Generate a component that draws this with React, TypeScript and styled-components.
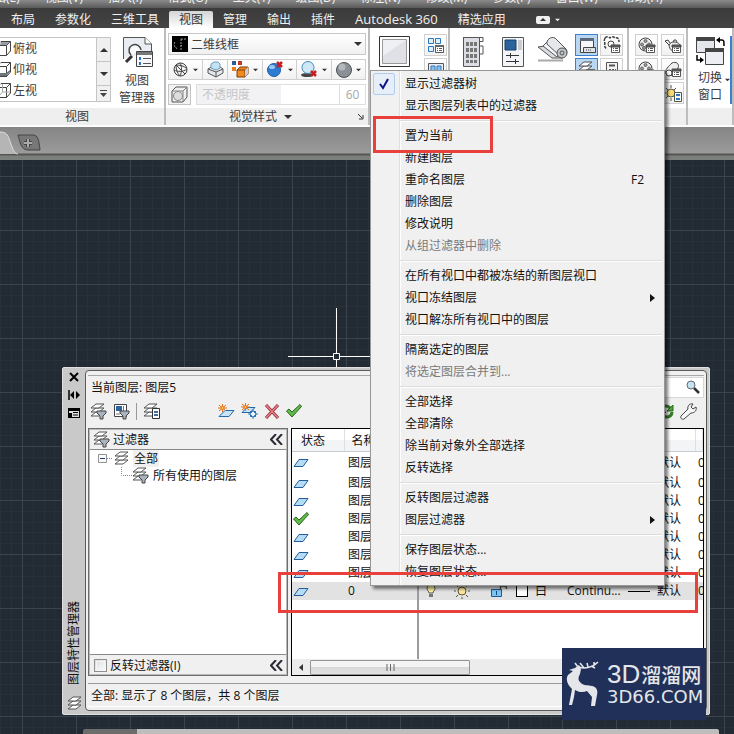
import React from "react";
import styled, { createGlobalStyle, css } from "styled-components";

const uiFont = '"Open Sans", "Noto Sans CJK SC", sans-serif';

const GlobalStyle = createGlobalStyle`
  *, *::before, *::after { box-sizing: border-box; }
  html, body { margin: 0; height: 100%; }
  body { font-family: ${uiFont}; font-size: 12px; color: #111; background: #222a34; overflow: hidden; }
  button, input, select { font: inherit; color: inherit; margin: 0; padding: 0; border: 0; background: none; border-radius: 0; }
  svg { display: block; flex: none; }
`;

/* ---------- Application shell ---------- */

const Shell = styled.div`
  position: relative;
  display: flex;
  flex-direction: column;
  min-height: 100vh;
  overflow: hidden;
`;

const MenuBar = styled.nav`
  display: flex;
  align-items: flex-end;
  height: 8px;
  overflow: hidden;
  background: linear-gradient(#8a8a8a, #5a5a5a);
`;

const MenuLink = styled.button`
  flex: none;
  height: 20px;
  padding-right: 25px;
  line-height: 20px;
  color: #f2f2f2;
  white-space: nowrap;
  &:first-child { margin-left: -18px; }
`;

const TabBar = styled.nav`
  display: flex;
  align-items: flex-end;
  height: 20px;
  padding-left: 1px;
  background: linear-gradient(#3b3b3b, #444);
`;

const RibbonTab = styled.button<{ $active?: boolean; $latin?: boolean }>`
  flex: none;
  height: 17px;
  padding: 0 10px;
  font-size: ${(p) => (p.$latin ? 13 : 12)}px;
  line-height: 17px;
  color: ${(p) => (p.$active ? "#333" : "#f0f0f0")};
  background: ${(p) => (p.$active ? "linear-gradient(#d4d4d4, #fff)" : "none")};
  border-radius: 2px 2px 0 0;
  white-space: nowrap;
`;

const RibbonToggle = styled.button`
  display: flex;
  align-items: center;
  height: 17px;
  padding-left: 20px;
`;

const CaretSlot = styled.span`
  display: flex;
  align-items: center;
  height: 17px;
  padding-left: 5px;
`;

/* ---------- Ribbon ---------- */

const Ribbon = styled.div`
  display: flex;
  background: #fff;
  border-bottom: 2px solid #fdfdfd;
  color: #3c3c3c;
`;

const Panel = styled.section<{ $width?: number }>`
  display: flex;
  flex-direction: column;
  ${(p) => (p.$width ? css`flex: none; width: ${p.$width}px;` : css`flex: 1; min-width: 0;`)}
  border-right: 2px solid #bdbdbd;
  overflow: hidden;
`;

const PanelBody = styled.div<{ $pad?: string; $gap?: number }>`
  display: flex;
  gap: ${(p) => p.$gap ?? 0}px;
  height: 80px;
  padding: ${(p) => p.$pad ?? "6px 6px 0"};
`;

const PanelStack = styled.div`
  display: flex;
  flex-direction: column;
  gap: 4px;
  height: 80px;
  padding: 5px 2px 0;
`;

const PanelTitle = styled.div<{ $shift?: number }>`
  display: flex;
  align-items: center;
  justify-content: center;
  gap: 7px;
  height: 17px;
  padding: 0 4px;
  padding-right: ${(p) => p.$shift ?? 4}px;
  line-height: 17px;
  background: #efefef;
`;

const TitleSpacer = styled.span`
  flex: 1;
`;

const ViewList = styled.div`
  display: flex;
  width: 111px;
  height: 65px;
  border: 1px solid #c4c4c4;
  border-left: 0;
`;

const ViewItems = styled.div`
  flex: 1;
  overflow: hidden;
`;

const ViewItem = styled.button`
  display: flex;
  align-items: center;
  gap: 2px;
  width: 100%;
  height: 21px;
  line-height: 21px;
`;

const Spinner = styled.div`
  display: grid;
  grid-template-rows: 24px 24px 1fr;
  width: 14px;
  border-left: 1px solid #c4c4c4;
  background: #f0f0f0;
`;

const SpinButton = styled.button`
  display: flex;
  align-items: center;
  justify-content: center;
  border-bottom: 1px solid #c4c4c4;
  &:last-child { border-bottom: 0; }
`;

const BigButton = styled.button<{ $iconOnly?: boolean }>`
  display: flex;
  flex-direction: column;
  align-items: center;
  flex: none;
  gap: 4px;
  padding-top: ${(p) => (p.$iconOnly ? 2 : 0)}px;
  line-height: 17px;
`;

const StyleSelect = styled.label`
  display: flex;
  align-items: center;
  height: 22px;
  padding: 0 3px;
  gap: 3px;
  border: 1px solid #c8c8c8;
  background: linear-gradient(#fff, #f0f0f0);
`;

const PlainSelect = styled.select`
  flex: 1;
  min-width: 0;
  appearance: none;
`;

const ToolRow = styled.div`
  display: flex;
  height: 21px;
`;

const SplitTool = styled.button<{ $grow?: number }>`
  display: flex;
  align-items: center;
  justify-content: space-evenly;
  flex: ${(p) => p.$grow ?? 35} 1 0;
  border: 1px solid #cfcfcf;
  border-left-width: 0;
  background: linear-gradient(#fff, #f1f1f1);
  &:first-child { border-left-width: 1px; }
`;

const SquareTool = styled.button`
  display: flex;
  align-items: center;
  justify-content: center;
  width: 23px;
  border: 1px solid #c4c4c4;
  background: #f2f2f2;
`;

const Opacity = styled.label`
  display: flex;
  flex: 1;
  margin-left: 5px;
  padding-left: 5px;
  line-height: 19px;
  border: 1px solid #dedede;
  color: #c6c6c6;
  background: linear-gradient(90deg, #f2f2f4 50%, #fff 50%);
`;

const OpacityValue = styled.input`
  width: 26px;
  margin-left: auto;
  text-align: center;
  border-left: 1px solid #dedede;
  color: #a8a8a8;
`;

const ToolColumn = styled.div`
  display: flex;
  flex-direction: column;
  gap: 2px;
`;

const SmallTool = styled.button<{ $active?: boolean }>`
  display: flex;
  align-items: center;
  justify-content: center;
  width: 23px;
  height: 22px;
  border: 1px solid ${(p) => (p.$active ? "#3c7fd0" : "#d0d0d0")};
  background: ${(p) => (p.$active ? "#b9d7f3" : "linear-gradient(#fff, #f1f1f1)")};
`;

const SwitchCaret = styled.span`
  align-self: center;
  padding-top: 16px;
`;

const EdgeTool = styled.button`
  width: 6px;
  height: 68px;
  border: 2px solid #3c7fd0;
  background: #b9d7f3;
`;

/* ---------- Drawing area ---------- */

const FileTabs = styled.div`
  display: flex;
  align-items: flex-start;
  height: 33px;
  background: linear-gradient(#858585, #9b9b9b 26px, #555 27px, #555 28px, #7c807c 29px);
`;

const Canvas = styled.main`
  position: relative;
  flex: 1;
  background-color: #222a34;
  background-image:
    linear-gradient(90deg, #3b434d 1px, transparent 1px),
    linear-gradient(#3b434d 1px, transparent 1px),
    repeating-linear-gradient(90deg, #28303a 0 1px, transparent 1px 20%),
    repeating-linear-gradient(#28303a 0 1px, transparent 1px 20%);
  background-size: 54px 54px;
  background-position: 22px 16px;
`;

const Crosshair = styled.svg`
  position: absolute;
  left: 288px;
  top: 148px;
`;

const CommandBar = styled.div`
  position: absolute;
  left: 83px;
  right: 15px;
  bottom: 0;
  height: 5px;
  border-radius: 2px 2px 0 0;
  background: linear-gradient(90deg, #6c6c6c 54px, #bdbdbd 54px);
`;

/* ---------- Layer palette ---------- */

const Palette = styled.section`
  position: absolute;
  left: 62px;
  right: 24px;
  top: 207px;
  bottom: 19px;
  display: flex;
  padding: 2px 2px 3px 0;
  border-radius: 2px;
  border: 1px solid #e0e0e0;
  background: #c9c9c9;
`;

const PaletteSide = styled.div`
  display: flex;
  flex-direction: column;
  align-items: center;
  gap: 4px;
  width: 22px;
`;

const SideButton = styled.button`
  display: flex;
  align-items: center;
  justify-content: center;
  width: 18px;
  height: 14px;
`;

const SideTitle = styled.h2`
  margin: auto 0 7px;
  font-size: 12px;
  line-height: 18px;
  font-weight: 400;
  writing-mode: vertical-rl;
  text-orientation: sideways;
  transform: rotate(180deg);
`;

const PaletteMain = styled.div`
  display: flex;
  flex-direction: column;
  flex: 1;
  min-width: 0;
  padding: 4px 2px 0;
  border: 1px solid #5a5a5a;
  border-radius: 4px;
  background: #f0f0f0;
`;

const PaletteHeader = styled.div`
  display: flex;
  align-items: center;
  justify-content: space-between;
  height: 23px;
  padding-left: 3px;
  border-top: 1px solid #a8a8a8;
`;

const SearchBox = styled.label`
  display: flex;
  align-items: center;
  width: 170px;
  height: 21px;
  padding-right: 3px;
  border: 1px solid #d8d8d8;
  background: #fff;
`;

const SearchInput = styled.input`
  flex: 1;
  min-width: 0;
  outline: none;
`;

const Toolbar = styled.div`
  display: flex;
  align-items: center;
  gap: 6px;
  height: 30px;
  padding: 0 7px 4px 2px;
`;

const ToolButton = styled.button`
  display: flex;
  flex: none;
`;

const ToolDivider = styled.span`
  width: 1px;
  height: 17px;
  background: #999;
`;

const ToolGap = styled.span<{ $width?: number }>`
  ${(p) => (p.$width ? css`width: ${p.$width}px;` : css`flex: 1;`)}
`;

const Panes = styled.div`
  display: flex;
  gap: 3px;
  flex: 1;
  min-height: 0;
`;

const FilterPane = styled.div`
  display: flex;
  flex-direction: column;
  flex: none;
  width: 200px;
  border: 1px solid #6e6e6e;
  outline: 1px solid #b9b9b9;
  outline-offset: -2px;
  background: #fff;
`;

const FilterHead = styled.div`
  display: flex;
  align-items: center;
  height: 21px;
  gap: 3px;
  padding: 0 4px 0 4px;
  border-bottom: 1px solid #8a8a8a;
  background: #f0f0f0;
`;

const FilterFoot = styled.div`
  display: flex;
  align-items: center;
  height: 21px;
  padding: 0 4px 0 5px;
  border-top: 1px solid #8a8a8a;
  background: #f0f0f0;
`;

const Grow = styled.span`
  flex: 1;
`;

const CollapseButton = styled.button`
  display: flex;
`;

const Tree = styled.ul`
  flex: 1;
  margin: 0;
  padding: 0 0 0 9px;
  list-style: none;
`;

const TreeRow = styled.li<{ $depth?: number }>`
  display: flex;
  align-items: center;
  height: 17px;
  padding-left: ${(p) => (p.$depth ?? 0) * 23}px;
  line-height: 17px;
`;

const TreeLabel = styled.span<{ $selected?: boolean }>`
  margin-left: 3px;
  padding: 0 1px;
  background: ${(p) => (p.$selected ? "#f0f0f0" : "none")};
`;

const CheckLabel = styled.label`
  display: flex;
  align-items: center;
  gap: 3px;
`;

const CheckBox = styled.input`
  appearance: none;
  width: 13px;
  height: 13px;
  border: 1px solid #8f8f8f;
  background: linear-gradient(135deg, #d8dce0, #fff);
  outline: 1px solid #f4f4f4;
  outline-offset: -3px;
`;

const ListPane = styled.div`
  position: relative;
  display: flex;
  flex-direction: column;
  flex: 1;
  min-width: 0;
  overflow: hidden;
  border: 1px solid #000;
  background: #fff;
`;

const LayerTable = styled.table`
  width: 100%;
  table-layout: fixed;
  border-collapse: collapse;
  white-space: nowrap;
`;

const HeadCell = styled.th<{ $width?: number }>`
  ${(p) => p.$width && css`width: ${p.$width}px;`}
  height: 22px;
  padding: 0 0 0 9px;
  overflow: hidden;
  text-align: left;
  font-weight: 400;
  border-right: 1px solid #dcdfe3;
  border-bottom: 1px solid #c9ccd0;
  background: linear-gradient(#fff 50%, #f3f4f6 50%);
  &:nth-child(2) { padding-left: 7px; }
`;

const LayerRow = styled.tr<{ $selected?: boolean }>`
  height: 18px;
  background: ${(p) => (p.$selected ? "#e2e2e2" : "none")};
  &:first-child { height: 23px; }
`;

const Cell = styled.td<{ $pad?: number }>`
  height: 18px;
  padding: 0 0 0 ${(p) => p.$pad ?? 2}px;
  overflow: hidden;
  line-height: 18px;
`;

const CellFlow = styled.span`
  display: flex;
  align-items: center;
  gap: 7px;
`;

const Swatch = styled.span`
  width: 12px;
  height: 12px;
  border: 1px solid #000;
  background: #fff;
`;

const WeightLine = styled.span`
  width: 22px;
  height: 1px;
  background: #000;
`;

const Splitter = styled.div`
  position: absolute;
  left: 125px;
  top: 24px;
  bottom: 16px;
  width: 2px;
  background: #9c9c9c;
`;

const ScrollBar = styled.div`
  display: flex;
  align-items: center;
  height: 16px;
  margin-top: auto;
  background: #ececec;
`;

const ScrollArrow = styled.button`
  display: flex;
  align-items: center;
  justify-content: center;
  width: 18px;
  height: 16px;
`;

const ScrollThumb = styled.div`
  display: flex;
  align-items: center;
  justify-content: center;
  width: 39%;
  height: 15px;
  border: 1px solid #959595;
  border-radius: 1px;
  background: linear-gradient(#f4f4f4 50%, #d8d8d8 50%, #e2e2e2);
`;

const PaletteStatus = styled.div`
  height: 24px;
  margin: 7px 0 3px;
  padding-left: 3px;
  line-height: 24px;
  border-top: 1px solid #9a9a9a;
  border-bottom: 1px solid #fff;
`;

/* ---------- Context menu ---------- */

const ContextMenu = styled.div`
  position: absolute;
  left: 370px;
  top: 70px;
  width: 295px;
  padding: 2px;
  border: 1px solid #979797;
  background: linear-gradient(90deg, #f1f1f1 28px, #dfdfdf 28px, #dfdfdf 29px, #fff 29px, #fff 30px, #f0f0f0 30px);
  box-shadow: 3px 3px 3px rgba(0, 0, 0, 0.5);
`;

const MenuItem = styled.button`
  display: grid;
  grid-template-columns: 32px 1fr auto 12px;
  align-items: center;
  width: 100%;
  height: 22px;
  line-height: 22px;
  text-align: left;
  white-space: nowrap;
  color: #111;
  &:disabled { color: #7a7a7a; }
`;

const MenuSeparator = styled.div`
  height: 8px;
  margin-left: 27px;
  background: linear-gradient(transparent 3px, #dcdcdc 3px, #dcdcdc 4px, #fff 4px, #fff 5px, transparent 5px);
`;

const CheckMark = styled.span`
  display: flex;
  align-items: center;
  justify-content: center;
  width: 22px;
  height: 22px;
  border: 1px solid #aeccf0;
  border-radius: 2px;
  background: #e6eef8;
`;

const Shortcut = styled.span`
  padding-right: 6px;
`;

/* ---------- Overlays ---------- */

const Marker = styled.div<{ $x: number; $y: number; $w: number; $h: number }>`
  position: absolute;
  left: ${(p) => p.$x}px;
  top: ${(p) => p.$y}px;
  width: ${(p) => p.$w}px;
  height: ${(p) => p.$h}px;
  border: 3px solid #e8403c;
  pointer-events: none;
`;

const Brand = styled.aside`
  position: absolute;
  right: 28px;
  bottom: 14px;
  display: flex;
  align-items: center;
  gap: 5px;
  width: 144px;
  height: 72px;
  padding: 0 0 0 4px;
  color: #e4e6ea;
  background: #213058;
`;

const BrandText = styled.div`
  display: flex;
  flex-direction: column;
  white-space: nowrap;
`;

const BrandName = styled.strong`
  display: flex;
  align-items: center;
  gap: 1px;
  height: 25px;
  font: 500 20px/25px "Noto Sans CJK SC", sans-serif;
`;

const BrandPrefix = styled.span`
  font: 400 26px/25px "Liberation Sans", sans-serif;
`;

const BrandSite = styled.span`
  font: 18px/20px "DejaVu Sans", sans-serif;
`;

/* ---------- Icons ---------- */

const Caret = ({ w = 7, color = "#333" }: { w?: number; color?: string }) => (
  <svg width={w} height={4} viewBox="0 0 8 4" aria-hidden="true"><path d="M0 0h8L4 4z" fill={color} /></svg>
);

const UpCaret = () => (
  <svg width={8} height={4} viewBox="0 0 8 4"><path d="M0 4h8L4 0z" fill="#333" /></svg>
);

const BarCaret = () => (
  <svg width={7} height={8} viewBox="0 0 7 8"><path d="M0 0h7v1H0zM0 3h7L3.5 7z" fill="#444" /></svg>
);

const CubeFace = ({ face }: { face: "top" | "bottom" | "left" }) => (
  <svg width={11} height={17} viewBox="0 0 11 17" fill="none" stroke="#444">
    <path d="M0 5.500h6.500v10H0M6.500 5.500l4-4v9.500l-4 4.500M10.500 1.500H1L0 2.500" />
    {face === "top" && <path d="M0 5L1 2h9L6.500 5z" fill="#999da6" stroke="none" />}
    {face === "bottom" && <path d="M0 15v-3h6l4-3v2l-4 4z" fill="#70747c" stroke="none" />}
    {face === "left" && <path d="M2.500 2v8L0 13M3 10h7" stroke="#aaa" />}
  </svg>
);

const ViewManagerIcon = () => (
  <svg width={31} height={31} viewBox="0 0 31 31" fill="none">
    <path d="M1.500 22V.500H23L29.500 7v7" fill="#e9ecf2" stroke="#555" />
    <path d="M23 .500V7h6.500" fill="#fff" stroke="#555" />
    <path d="M9 18a6 6 0 1 1 10-5" stroke="#444" strokeWidth="1.500" fill="#f9fafc" />
    <path d="M4 25l6-6" stroke="#333" strokeWidth="3" />
    <path d="M14.500 14.500h16v15h-16z" fill="#f7f9fc" stroke="#444" />
    <path d="M15 15h15v3H15z" fill="#777" />
    <path d="M17 21.500h2m-2 5h2" stroke="#2b6cc0" strokeWidth="3" />
    <path d="M21 21.500h8m-8 5h8" stroke="#555" />
  </svg>
);

const WireBoxIcon = () => (
  <svg width={16} height={16} viewBox="0 0 16 16">
    <path d="M0 0h16v16H0z" fill="#000" />
    <path d="M3 6c-2 3 0 6 3 7M10 9l-2 2M9 14V3M9 3h6" stroke="#999" strokeDasharray="2 1" fill="none" />
  </svg>
);

const ApertureIcon = () => (
  <svg width={15} height={15} viewBox="0 0 15 15" fill="none" stroke="#444">
    <circle cx="7.500" cy="7.500" r="6.500" fill="#f5f5f5" />
    <path d="M3 3l9 9M3 3c4 0 8 1 10 3M3 3c0 4 1 8 4 11M7 1c2 3 2 9 0 13M1 8c4 2 9 2 13-1" />
  </svg>
);

const XrayBoxIcon = () => (
  <svg width={17} height={17} viewBox="0 0 17 17" fill="none" stroke="#555">
    <path d="M1 8l5-3h6l4 3v4l-7 4-8-4z" fill="#e4e7ec" />
    <path d="M1 8l8 3 7-3M9 11v5" />
    <path d="M4 7V3l3-2h4l2 2v4l-4 2z" fill="#c3e2f4" stroke="#6c9fc0" />
  </svg>
);

const MaterialIcon = () => (
  <svg width={17} height={17} viewBox="0 0 17 17">
    <path d="M0 0h4v4H0z" fill="#2c5d98" /><path d="M6 0h4v4H6z" fill="#c0392b" />
    <path d="M0 6h4v4H0z" fill="#e67e22" />
    <path d="M5 9l3-3h8v7l-3 3H5z" fill="#f28a1e" stroke="#7a3d0e" />
    <path d="M5 9h8v7M13 9l3-3" stroke="#7a3d0e" fill="none" /><path d="M13 9l3-3v7l-3 3z" fill="#ccd" />
  </svg>
);

const RedX = ({ x, y }: { x: number; y: number }) => (
  <path d={`M${x} ${y}l5 5m0-5l-5 5`} stroke="#c41e1e" strokeWidth="2.500" />
);

const ShadeIcon = () => (
  <svg width={18} height={17} viewBox="0 0 18 17" fill="none">
    <circle cx="8" cy="9" r="6.500" fill="#2d7cd1" stroke="#1d5ca5" /><ellipse cx="6" cy="6" rx="3" ry="2" fill="#9cc9f2" />
    <RedX x={11} y={1} />
  </svg>
);

const ShadowIcon = () => (
  <svg width={17} height={17} viewBox="0 0 17 17" fill="none">
    <ellipse cx="6" cy="14" rx="6" ry="2" fill="#444" />
    <circle cx="7" cy="6.500" r="6" fill="#cfe8f8" stroke="#4889b5" /><RedX x={10} y={10} />
  </svg>
);

const SphereIcon = () => (
  <svg width={16} height={16} viewBox="0 0 16 16">
    <circle cx="8" cy="8" r="7.500" fill="#8b9096" stroke="#4b4f55" /><circle cx="6" cy="5" r="3.500" fill="#b3b8bd" />
  </svg>
);

const RoundBoxIcon = () => (
  <svg width={17} height={17} viewBox="0 0 17 17" fill="none" stroke="#555">
    <path d="M1 5l4-4h11v10l-4 5H1z" fill="#eee" /><path d="M1 5h11v11M12 5l4-4" stroke="#888" />
    <circle cx="7" cy="10" r="4.500" stroke="#888" fill="#ddd" />
  </svg>
);

const LauncherIcon = () => (
  <svg width={6} height={6} viewBox="0 0 6 6"><path d="M0 0l4 4M5 1v4H1" stroke="#333" fill="none" /></svg>
);

const ViewportIcon = () => (
  <svg width={31} height={31} viewBox="0 0 31 31">
    <path d="M.500 .500h30v30H.500z" fill="#fdfdfd" stroke="#333" />
    <path d="M3.500 3.500h24v24h-24z" fill="#dfe1e6" stroke="#999" /><path d="M4 4h23L4 20z" fill="#eef0f3" />
  </svg>
);

const MiniList = ({ x = 8, y = 8 }: { x?: number; y?: number }) => (
  <g>
    <path d={`M${x + 0.5} ${y + 0.5}h8v7h-8z`} fill="#fff" stroke="#555" />
    <path d={`M${x} ${y}h9v2h-9z`} fill="#666" />
    <path d={`M${x + 2} ${y + 3.5}h1m1 0h3m-5 2h1m1 0h3`} stroke="#555" />
  </g>
);

const NamedViewsIcon = () => (
  <svg width={18} height={17} viewBox="0 0 18 17" fill="none">
    <path d="M1.500 1.500h5v5h-5zM1.500 9.500h5v5h-5zM8.500 1.500h5v5h-5z" stroke="#2a78c2" fill="#e2f1fc" /><MiniList />
  </svg>
);

const JoinIcon = () => (
  <svg width={18} height={17} viewBox="0 0 18 17" fill="none">
    <path d="M1.500 2.500h15v11h-15z" stroke="#555" fill="#e9edf3" /><path d="M4 5h4v5H4zM10 5h4v5h-4z" fill="#8fc0ec" stroke="#2a78c2" />
  </svg>
);

const TowerIcon = () => (
  <svg width={22} height={31} viewBox="0 0 22 31" fill="none" stroke="#555">
    <path d="M1.500 1.500h16v29h-16z" fill="#dcdee3" /><path d="M1 1.500h20v4h-3" /><path d="M18 10h3v8h-3" />
    <path d="M5.500 6v21M9.500 6v21M13.500 6v21" stroke="#777" strokeWidth="3" strokeDasharray="4 2" />
  </svg>
);

const PropertiesIcon = () => (
  <svg width={22} height={31} viewBox="0 0 22 31" fill="none" stroke="#555">
    <path d="M.500 1.500h21v29H.500z" fill="#f4f5f8" /><path d="M3 4h11v10H3z" fill="#2c639d" stroke="#17406d" />
    <path d="M16 4h4v10h-4z" fill="#ccc" stroke="none" />
    <path d="M4 19.500h13M4 25.500h13M8.500 17v5M13.500 23v5" stroke="#333" />
  </svg>
);

const SheetRollIcon = () => (
  <svg width={32} height={27} viewBox="0 0 32 27" fill="none" stroke="#555">
    <path d="M1 24.500h25" stroke="#aaa" strokeWidth="2" /><path d="M1 11l14 11h11L16 9z" fill="#d8dbe0" />
    <path d="M6 10l14 11 4-6L12 4z" fill="#f2f3f5" /><path d="M10 8c-1-4 4-8 8-6l11 11c3 4-2 10-6 7z" fill="#e5e7ea" />
    <circle cx="25" cy="17" r="5" fill="#c0c4ca" /><circle cx="25" cy="17" r="2" />
  </svg>
);

const CommandIcon = () => (
  <svg width={18} height={17} viewBox="0 0 18 17" fill="none" stroke="#444">
    <path d="M2.500 1.500h13v14h-13z" fill="#f7f7f7" /><path d="M2 1h14v3H2z" fill="#5d6978" stroke="none" />
    <path d="M5.500 10.500h12v5h-12z" fill="#dfe3e8" /><path d="M8 13h1m1 0h1m1 0h1" />
  </svg>
);

const CloudIcon = () => (
  <svg width={18} height={18} viewBox="0 0 18 18" fill="none" stroke="#444">
    <path d="M2 2c2-2 4-1 5 0 2-2 4-1 5 0 3-1 4 1 4 4M2 2c-1 2-1 4 0 5-1 3 0 5 2 6" strokeDasharray="3 1" strokeWidth="1.500" /><circle cx="8" cy="8" r="3" /><MiniList y={9} />
  </svg>
);

const Sheets = () => (
  <g fill="#fff" stroke="#555">
    <path d="M1 13h8l5-4H6z" /><path d="M1 9h8l5-4H6z" /><path d="M1 5h8l5-4H6z" />
  </g>
);

const LayerSheetsIcon = () => (
  <svg width={17} height={15} viewBox="-1 0 17 15"><Sheets /></svg>
);

const LayerPanelIcon = () => (
  <svg width={18} height={17} viewBox="0 0 18 17" fill="none"><Sheets /><MiniList /></svg>
);

const CalculatorIcon = () => (
  <svg width={14} height={17} viewBox="0 0 14 17" fill="none" stroke="#555">
    <path d="M1.500 1.500h11v15h-11z" fill="#f4f4f4" /><path d="M4 4.500h6" strokeWidth="2" /><path d="M4 8.500h7M4 11.500h7M4 14h7" strokeDasharray="2 1" />
  </svg>
);

const GearListIcon = ({ warm }: { warm?: boolean }) => (
  <svg width={18} height={17} viewBox="0 0 18 17" fill="none" stroke="#444">
    <circle cx="7.500" cy="7.500" r="6.500" fill="#f0f1f2" />
    <g fill="#999" stroke="#666">
      <circle cx="7.500" cy="4" r="1.500" /><circle cx="4" cy="7.500" r="1.500" /><circle cx="11" cy="7.500" r="1.500" /><circle cx="6" cy="11" r="1.500" />
    </g>
    {warm ? <path d="M9 9h7v6H9z" fill="#e98b3d" /> : <MiniList />}
  </svg>
);

const TeapotIcon = () => (
  <svg width={18} height={17} viewBox="0 0 18 17" fill="none" stroke="#444">
    <path d="M1 4l4 4c1-2 3-3 5-3s6 1 6 4M1 4l3-1 2 3M5 7c0 3 1 6 4 7M9 5l1-2h2l1 2" fill="#e9ebee" /><MiniList />
  </svg>
);

const MapListIcon = () => (
  <svg width={18} height={17} viewBox="0 0 18 17" fill="none" stroke="#444">
    <path d="M2 13c-2-4 3-8 6-11 4-2 8 1 6 5l-4 8z" fill="#eceef1" /><circle cx="5" cy="12" r="3" fill="#fff" /><MiniList />
  </svg>
);

const SunListIcon = () => (
  <svg width={18} height={17} viewBox="0 0 18 17" fill="none" stroke="#554">
    <circle cx="7" cy="8" r="4" fill="#f9d976" /><path d="M7 0v3M0 8h2M2 3l2 2M12 3l-2 2M2 13l2-2M7 13v3" />
    <path d="M10.500 7.500h7v9h-7z" fill="#fff" /><path d="M12 10h4m-4 4h4" stroke="#2a78c2" strokeWidth="2" />
  </svg>
);

const SwitchWindowsIcon = () => (
  <svg width={30} height={29} viewBox="0 0 30 29" fill="none">
    <path d="M1.500 2.500h18v14h-18z" fill="#e3e6ea" stroke="#444" /><path d="M1 1h19v4H1z" fill="#444" />
    <path d="M10.500 13.500h18v15h-18z" fill="#eceef2" stroke="#444" /><path d="M10 12h19v4H10z" fill="#444" />
    <path d="M22 4h5c2 0 2 1 2 6M2 19v5h6" stroke="#000" strokeWidth="1.500" /><path d="M25 1l-4 3 4 3zM5 21l4 3-4 3z" fill="#000" />
  </svg>
);

const RibbonToggleIcon = () => (
  <svg width={14} height={8} viewBox="0 0 14 8"><rect width="14" height="8" rx="2" fill="#f0f0f0" /><path d="M4 5h6L7 2z" fill="#333" /></svg>
);

const Funnel = ({ x = 7, y = 8 }: { x?: number; y?: number }) => (
  <path d={`M${x} ${y}h9v2l-3 3v3h-3v-3l-3-3z`} fill="#aab4c0" stroke="#444" />
);

const LayerFilterIcon = () => (
  <svg width={17} height={17} viewBox="0 0 17 17" fill="none"><Sheets /><Funnel /></svg>
);

const GroupFilterIcon = () => (
  <svg width={17} height={17} viewBox="0 0 17 17" fill="none">
    <path d="M1.500 1.500h12v12h-12z" fill="#fff" stroke="#444" /><path d="M3 3h6v5H3z" fill="#2c639d" /><path d="M10.500 3v5M3 11h4" stroke="#777" /><Funnel />
  </svg>
);

const LayerStatesIcon = () => (
  <svg width={17} height={17} viewBox="0 0 17 17" fill="none">
    <Sheets /><path d="M9.500 5.500h7v10h-7z" fill="#fff" stroke="#333" /><path d="M11 9h4m-4 3h4" stroke="#456fa0" strokeWidth="2" />
  </svg>
);

const Burst = () => (
  <g>
    <path d="M4.500 0v8M0 4h9M1 1l7 6M8 1L1 7" stroke="#e8701a" />
    <circle cx="4.500" cy="4" r="1.500" fill="#ffd25a" stroke="#e8701a" />
  </g>
);

const NewLayerIcon = () => (
  <svg width={17} height={14} viewBox="0 0 17 14" fill="none"><path d="M1 12.500h10l5-6H7z" fill="#c8e4f8" stroke="#2566a8" /><Burst /></svg>
);

const NewFrozenIcon = () => (
  <svg width={17} height={16} viewBox="0 0 17 16" fill="none">
    <path d="M1 9.500h8l5-5H6z" fill="#c8e4f8" stroke="#2566a8" /><Burst />
    <circle cx="12" cy="11" r="3" fill="#eef7ff" stroke="#2566a8" /><path d="M12 6v3M12 13v3M7 11h3M14 11h3M9 8l2 2M15 8l-2 2M9 14l2-2M15 14l-2-2" stroke="#3e82c4" />
  </svg>
);

const DeleteIcon = () => (
  <svg width={16} height={15} viewBox="0 0 16 15" fill="none">
    <path d="M2 1l12 13M14 1L2 14" stroke="#8c2430" strokeWidth="3" /><path d="M2 1l12 13M14 1L2 14" stroke="#ee8088" strokeWidth="1.500" />
  </svg>
);

const TickIcon = () => (
  <svg width={16} height={14} viewBox="0 0 16 14"><path d="M.500 7L3 5l3 3 8-7.500 1.500 2L6 13z" fill="#62b84a" stroke="#28671c" /></svg>
);

const RefreshIcon = () => (
  <svg width={15} height={15} viewBox="0 0 15 15" fill="none">
    <path d="M2 7a5 5 0 0 1 9-3M13 8a5 5 0 0 1-9 3" stroke="#347d28" strokeWidth="3" /><path d="M14 1v6H8zM1 14V8h6z" fill="#50a83b" stroke="#28671c" />
  </svg>
);

const WrenchIcon = () => (
  <svg width={17} height={17} viewBox="0 0 17 17">
    <path d="M1 13l7-7c-1-3 2-6 5-5l-2 3 2 2 3-2c1 3-1 6-5 6l-7 6c-2 1-4-1-3-3z" fill="#f6f6f6" stroke="#444" />
  </svg>
);

const SearchIcon = () => (
  <svg width={14} height={14} viewBox="0 0 14 14" fill="none">
    <path d="M8 8l5 5" stroke="#333" strokeWidth="2.500" /><circle cx="5" cy="5" r="4" fill="#c6e2ee" stroke="#667" />
  </svg>
);

const DoubleChevron = () => (
  <svg width={13} height={11} viewBox="0 0 13 11"><path d="M6 0L1 5.500 6 11M12 0L7 5.500 12 11" stroke="#2c2c36" strokeWidth="2" fill="none" /></svg>
);

const TreeToggle = () => (
  <svg width={15} height={9} viewBox="0 0 15 9" fill="none">
    <path d="M.500 .500h8v8h-8z" fill="#fafafa" stroke="#919191" /><path d="M2 4.500h5" stroke="#223a7a" /><path d="M9 4.500h6" stroke="#888" strokeDasharray="1 1" />
  </svg>
);

const TreeBranch = () => (
  <svg width={11} height={17} viewBox="0 0 11 17" fill="none"><path d="M.500 0v8.500H11" stroke="#888" strokeDasharray="1 1" /></svg>
);

const LayerIcon = () => (
  <svg width={16} height={9} viewBox="0 0 16 9"><path d="M1 8.500h9l5-7H6z" fill="#b4dcf6" stroke="#245d99" /></svg>
);

const BulbIcon = () => (
  <svg width={10} height={14} viewBox="0 0 10 14">
    <path d="M3 9c0-2-2-2-2-5a4 4 0 0 1 8 0c0 3-2 3-2 5z" fill="#fdf3a4" stroke="#555" /><path d="M3 10h4v3H3z" fill="#777" />
  </svg>
);

const SunIcon = () => (
  <svg width={16} height={16} viewBox="0 0 16 16" stroke="#5c532f" fill="none">
    <circle cx="8" cy="8" r="4" fill="#fbe6a0" /><path d="M8 0v2M8 14v2M0 8h2M14 8h2M2 2l2 2M12 12l2 2M14 2l-2 2M4 12l-2 2" />
  </svg>
);

const UnlockIcon = () => (
  <svg width={17} height={14} viewBox="0 0 17 14" fill="none">
    <path d="M9.500 6V2h4c2 0 2 2 2 3" stroke="#555" strokeWidth="1.500" /><path d="M.500 5.500h10v7H.500z" fill="#7ec3f1" stroke="#1c5b96" /><path d="M5.500 7v4" stroke="#124a80" />
  </svg>
);

const CloseIcon = () => (
  <svg width={10} height={10} viewBox="0 0 10 10"><path d="M1 1l8 8M9 1L1 9" stroke="#000" strokeWidth="2" /></svg>
);

const AutoHideIcon = () => (
  <svg width={12} height={10} viewBox="0 0 12 10"><path d="M1 0v10" stroke="#000" strokeWidth="1.500" /><path d="M6 1v8L2 5zM8 1v8l4-4z" /></svg>
);

const PaletteMenuIcon = () => (
  <svg width={12} height={10} viewBox="0 0 12 10"><path d="M0 0h12v10H0z" /><path d="M1 3h10v6H4V5H1z" fill="#ddd" /><path d="M5 4.500h5M5 7h5" stroke="#000" /></svg>
);

const MenuCheckIcon = () => (
  <svg width={10} height={12} viewBox="0 0 10 12"><path d="M1 6l3 4 5-9" stroke="#0c1284" strokeWidth="2" fill="none" /></svg>
);

const SubmenuArrow = () => (
  <svg width={5} height={8} viewBox="0 0 5 8"><path d="M0 0v8l5-4z" fill="#111" /></svg>
);

const NewTabIcon = () => (
  <svg width={42} height={28} viewBox="0 0 42 28" fill="none">
    <path d="M0 5c8 0 8 4 11 12 2 6 4 10 7 10H0z" fill="#b5b5b5" /><path d="M0 5c8 0 8 4 11 12 2 6 4 10 7 10" stroke="#ddd" />
    <path d="M18 8h15c5 0 6 5 7 15H28c-7 0-8-8-10-15z" fill="#777" stroke="#444" />
    <path d="M28 12v8M24 16h8" stroke="#444" strokeWidth="4" /><path d="M28 12v8M24 16h8" stroke="#aaa" strokeWidth="2" />
  </svg>
);

const DeerIcon = () => (
  <svg width={36} height={46} viewBox="0 0 36 46" fill="none">
    <path d="M3 9l6-2 4-3 2 4-1 5c-2 3-2 6 0 8 3 4 8 3 12 4 5 1 6 5 5 9l-2 11h-4l1-9-5-6c-4 2-9 1-12-1l-1 7-2 8H3l3-16c-4-4-7-9-4-14l5-4-4-1z" fill="#e4e6ea" />
    <path d="M13 6c5 2 13 1 19-5M18 7l-4-5M22 6l-1-4M25 5l4 2M28 4l0-3M12 6L9 2" stroke="#e4e6ea" strokeWidth="1.500" />
  </svg>
);

/* ---------- Data ---------- */

const menus = ["编辑(E)", "视图(V)", "插入(I)", "格式(O)", "工具(T)", "绘图(D)", "标注(N)", "修改(M)", "参数(P)", "窗口(W)", "帮助(H)"];
const tabs = ["布局", "参数化", "三维工具", "视图", "管理", "输出", "插件", "Autodesk 360", "精选应用"];
const columns: [string, number | undefined][] = [
  ["状态", 52], ["名称", 75], ["", 24], ["", 38], ["", 32], ["", 51], ["", 61], ["", 70], ["说", undefined],
];
const layers = ["图层1", "图层2", "图层3", "图层5", "图层4", "图层6", "图层7", "0"];

type Entry = { label: string; checked?: boolean; shortcut?: string; submenu?: boolean; disabled?: boolean };
const menuGroups: Entry[][] = [
  [{ label: "显示过滤器树", checked: true }, { label: "显示图层列表中的过滤器" }],
  [
    { label: "置为当前" }, { label: "新建图层" }, { label: "重命名图层", shortcut: "F2" },
    { label: "删除图层" }, { label: "修改说明" }, { label: "从组过滤器中删除", disabled: true },
  ],
  [{ label: "在所有视口中都被冻结的新图层视口" }, { label: "视口冻结图层", submenu: true }, { label: "视口解冻所有视口中的图层" }],
  [{ label: "隔离选定的图层" }, { label: "将选定图层合并到...", disabled: true }],
  [{ label: "全部选择" }, { label: "全部清除" }, { label: "除当前对象外全部选择" }, { label: "反转选择" }],
  [{ label: "反转图层过滤器" }, { label: "图层过滤器", submenu: true }],
  [{ label: "保存图层状态..." }, { label: "恢复图层状态..." }],
];

/* ---------- Sections ---------- */

const RibbonArea = () => (
  <Ribbon>
    <Panel $width={166}>
      <PanelBody $pad="9px 0 0" $gap={8}>
        <ViewList>
          <ViewItems>
            <ViewItem><CubeFace face="top" />俯视</ViewItem>
            <ViewItem><CubeFace face="bottom" />仰视</ViewItem>
            <ViewItem><CubeFace face="left" />左视</ViewItem>
          </ViewItems>
          <Spinner>
            <SpinButton aria-label="向上"><UpCaret /></SpinButton>
            <SpinButton aria-label="向下"><Caret w={8} /></SpinButton>
            <SpinButton aria-label="展开"><BarCaret /></SpinButton>
          </Spinner>
        </ViewList>
        <BigButton><ViewManagerIcon /><span>视图<br />管理器</span></BigButton>
      </PanelBody>
      <PanelTitle $shift={14}>视图</PanelTitle>
    </Panel>

    <Panel $width={204}>
      <PanelStack>
        <StyleSelect>
          <WireBoxIcon />
          <PlainSelect aria-label="视觉样式" defaultValue="二维线框"><option>二维线框</option></PlainSelect>
          <Caret w={8} />
        </StyleSelect>
        <ToolRow>
          <SplitTool aria-label="边"><ApertureIcon /><Caret w={5} /></SplitTool>
          <SplitTool aria-label="X 射线" $grow={25}><XrayBoxIcon /></SplitTool>
          <SplitTool aria-label="材质"><MaterialIcon /><Caret w={5} /></SplitTool>
          <SplitTool aria-label="着色"><ShadeIcon /><Caret w={5} /></SplitTool>
          <SplitTool aria-label="阴影"><ShadowIcon /><Caret w={5} /></SplitTool>
          <SplitTool aria-label="球体"><SphereIcon /><Caret w={5} /></SplitTool>
        </ToolRow>
        <ToolRow>
          <SquareTool aria-label="透明"><RoundBoxIcon /></SquareTool>
          <Opacity>不透明度<OpacityValue defaultValue="60" disabled /></Opacity>
        </ToolRow>
      </PanelStack>
      <PanelTitle><TitleSpacer />视觉样式<Caret w={8} /><TitleSpacer /><LauncherIcon /></PanelTitle>
    </Panel>

    <Panel $width={80}>
      <PanelBody $pad="6px 0 0 9px" $gap={14}>
        <BigButton $iconOnly aria-label="视口配置"><ViewportIcon /></BigButton>
        <ToolColumn>
          <SmallTool aria-label="命名"><NamedViewsIcon /></SmallTool>
          <SmallTool aria-label="合并"><JoinIcon /></SmallTool>
        </ToolColumn>
      </PanelBody>
      <PanelTitle />
    </Panel>

    <Panel $width={179}>
      <PanelBody $pad="6px 0 0 12px">
        <BigButton $iconOnly aria-label="工具选项板"><TowerIcon /></BigButton>
        <ToolGap $width={18} />
        <BigButton $iconOnly aria-label="特性"><PropertiesIcon /></BigButton>
        <ToolGap $width={13} />
        <BigButton $iconOnly aria-label="图纸集"><SheetRollIcon /></BigButton>
        <ToolGap $width={6} />
        <ToolColumn>
          <SmallTool $active aria-label="命令行"><CommandIcon /></SmallTool>
          <SmallTool $active aria-label="图层特性"><LayerPanelIcon /></SmallTool>
        </ToolColumn>
        <ToolGap $width={2} />
        <ToolColumn>
          <SmallTool aria-label="标记集"><CloudIcon /></SmallTool>
          <SmallTool aria-label="计算器"><CalculatorIcon /></SmallTool>
        </ToolColumn>
      </PanelBody>
      <PanelTitle />
    </Panel>

    <Panel $width={59}>
      <PanelBody $gap={3}>
        <ToolColumn>
          <SmallTool aria-label="渲染设置"><GearListIcon /></SmallTool>
          <SmallTool aria-label="材质浏览器"><GearListIcon warm /></SmallTool>
          <SmallTool aria-label="光源"><GearListIcon /></SmallTool>
        </ToolColumn>
        <ToolColumn>
          <SmallTool aria-label="渲染"><TeapotIcon /></SmallTool>
          <SmallTool aria-label="贴图"><MapListIcon /></SmallTool>
          <SmallTool aria-label="阳光特性"><SunListIcon /></SmallTool>
        </ToolColumn>
      </PanelBody>
      <PanelTitle />
    </Panel>

    <Panel>
      <PanelBody $pad="8px 0 0 7px">
        <BigButton><SwitchWindowsIcon /><span>切换<br />窗口</span></BigButton>
        <SwitchCaret><Caret w={5} /></SwitchCaret>
        <ToolGap $width={1} />
        <EdgeTool aria-label="文件选项卡" />
      </PanelBody>
      <PanelTitle />
    </Panel>
  </Ribbon>
);

const LayerPalette = () => (
  <Palette>
    <PaletteSide>
      <SideButton aria-label="关闭"><CloseIcon /></SideButton>
      <SideButton aria-label="自动隐藏"><AutoHideIcon /></SideButton>
      <SideButton aria-label="特性"><PaletteMenuIcon /></SideButton>
      <SideTitle>图层特性管理器</SideTitle>
      <LayerSheetsIcon />
    </PaletteSide>
    <PaletteMain>
      <PaletteHeader>
        <span>当前图层: 图层5</span>
        <SearchBox><SearchInput aria-label="搜索图层" /><SearchIcon /></SearchBox>
      </PaletteHeader>
      <Toolbar>
        <ToolButton aria-label="新建特性过滤器"><LayerFilterIcon /></ToolButton>
        <ToolButton aria-label="新建组过滤器"><GroupFilterIcon /></ToolButton>
        <ToolDivider />
        <ToolButton aria-label="图层状态管理器"><LayerStatesIcon /></ToolButton>
        <ToolGap $width={46} />
        <ToolButton aria-label="新建图层"><NewLayerIcon /></ToolButton>
        <ToolButton aria-label="新建冻结图层"><NewFrozenIcon /></ToolButton>
        <ToolButton aria-label="删除图层"><DeleteIcon /></ToolButton>
        <ToolButton aria-label="置为当前"><TickIcon /></ToolButton>
        <ToolGap />
        <ToolButton aria-label="刷新"><RefreshIcon /></ToolButton>
        <ToolButton aria-label="设置"><WrenchIcon /></ToolButton>
      </Toolbar>
      <Panes>
        <FilterPane>
          <FilterHead>
            <LayerFilterIcon />过滤器<Grow />
            <CollapseButton aria-label="折叠过滤器树"><DoubleChevron /></CollapseButton>
          </FilterHead>
          <Tree>
            <TreeRow><TreeToggle /><LayerSheetsIcon /><TreeLabel $selected>全部</TreeLabel></TreeRow>
            <TreeRow $depth={1}><TreeBranch /><LayerFilterIcon /><TreeLabel>所有使用的图层</TreeLabel></TreeRow>
          </Tree>
          <FilterFoot>
            <CheckLabel><CheckBox type="checkbox" />反转过滤器(I)</CheckLabel><Grow />
            <CollapseButton aria-label="折叠"><DoubleChevron /></CollapseButton>
          </FilterFoot>
        </FilterPane>
        <ListPane>
          <LayerTable>
            <thead>
              <tr>{columns.map(([name, width], i) => <HeadCell key={i} $width={width}>{name}</HeadCell>)}</tr>
            </thead>
            <tbody>
              {layers.map((name) => {
                const selected = name === "0";
                return (
                  <LayerRow key={name} $selected={selected}>
                    <Cell $pad={1}>{name === "图层5" ? <TickIcon /> : <LayerIcon />}</Cell>
                    <Cell $pad={4}>{name}</Cell>
                    <Cell $pad={7}><BulbIcon /></Cell>
                    <Cell $pad={11}><SunIcon /></Cell>
                    <Cell $pad={10}><UnlockIcon /></Cell>
                    <Cell $pad={3}><CellFlow><Swatch />白</CellFlow></Cell>
                    <Cell $pad={3}>Continu...</Cell>
                    <Cell $pad={3}><CellFlow><WeightLine />默认</CellFlow></Cell>
                    <Cell $pad={3}>0</Cell>
                  </LayerRow>
                );
              })}
            </tbody>
          </LayerTable>
          <Splitter />
          <ScrollBar>
            <ScrollArrow aria-label="向左滚动">
              <svg width={4} height={7} viewBox="0 0 4 7"><path d="M4 0v7L0 3.500z" fill="#333" /></svg>
            </ScrollArrow>
            <ScrollThumb>
              <svg width={9} height={7} viewBox="0 0 9 7"><path d="M1 0v7M4.500 0v7M8 0v7" stroke="#666" /></svg>
            </ScrollThumb>
          </ScrollBar>
        </ListPane>
      </Panes>
      <PaletteStatus role="status">全部: 显示了 8 个图层，共 8 个图层</PaletteStatus>
    </PaletteMain>
  </Palette>
);

const LayerMenu = () => (
  <ContextMenu role="menu">
    {menuGroups.map((group, i) => (
      <React.Fragment key={i}>
        {i > 0 && <MenuSeparator role="separator" />}
        {group.map((item) => (
          <MenuItem key={item.label} role="menuitem" disabled={item.disabled}>
            <span>{item.checked && <CheckMark><MenuCheckIcon /></CheckMark>}</span>
            <span>{item.label}</span>
            <Shortcut>{item.shortcut}</Shortcut>
            <span>{item.submenu && <SubmenuArrow />}</span>
          </MenuItem>
        ))}
      </React.Fragment>
    ))}
  </ContextMenu>
);

export default function App() {
  return (
    <Shell>
      <GlobalStyle />
      <MenuBar>{menus.map((m) => <MenuLink key={m}>{m}</MenuLink>)}</MenuBar>
      <TabBar>
        {tabs.map((t) => (
          <RibbonTab key={t} $active={t === "视图"} $latin={t.startsWith("Autodesk")}>{t}</RibbonTab>
        ))}
        <RibbonToggle aria-label="最小化功能区">
          <RibbonToggleIcon />
          <CaretSlot><Caret w={5} color="#eee" /></CaretSlot>
        </RibbonToggle>
      </TabBar>
      <RibbonArea />
      <FileTabs><NewTabIcon /></FileTabs>
      <Canvas>
        <Crosshair width={97} height={59} viewBox="0 0 97 59" fill="none" stroke="#fff">
          <path d="M48.500 0v45M0 48.500h45M52 48.500h45M48.500 52v7M45.500 45.500h6v6h-6z" />
        </Crosshair>
        <CommandBar />
        <LayerPalette />
      </Canvas>
      <LayerMenu />
      <Marker $x={373} $y={116} $w={120} $h={37} />
      <Marker $x={278} $y={572} $w={420} $h={41} />
      <Brand>
        <DeerIcon />
        <BrandText>
          <BrandName><BrandPrefix>3D</BrandPrefix>溜溜网</BrandName>
          <BrandSite>3D66.COM</BrandSite>
        </BrandText>
      </Brand>
    </Shell>
  );
}
